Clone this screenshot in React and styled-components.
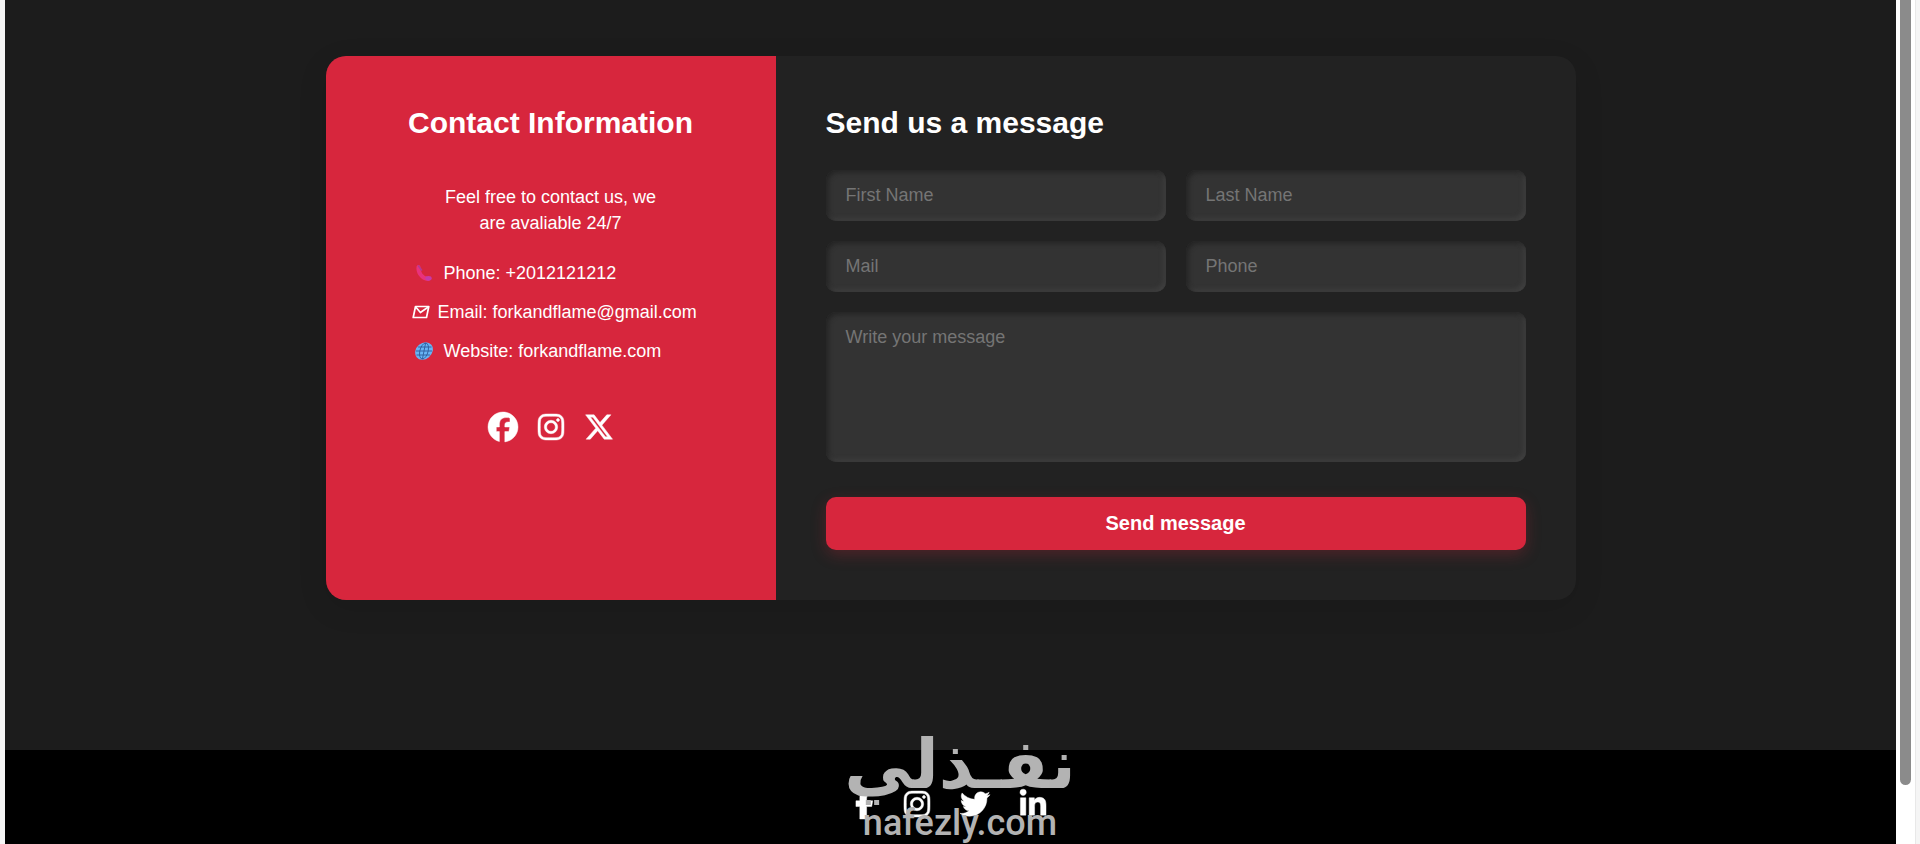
import React from "react";
import styled, { createGlobalStyle, css } from "styled-components";
import {
  FaFacebook,
  FaFacebookF,
  FaInstagram,
  FaLinkedinIn,
  FaTwitter,
  FaXTwitter,
} from "react-icons/fa6";

const colors = {
  primary: "#d7263d",
  page: "#1c1c1c",
  card: "#222222",
  field: "#333333",
  placeholder: "#757575",
  watermark: "#b3b3b3",
};

function PhoneIcon() {
  return (
    <svg width="18" height="18" viewBox="0 0 18 18" fill="none" aria-hidden="true">
      <path
        d="M3.500 3C2.800 8 6.500 14.500 13 15"
        stroke="#e8327c"
        strokeWidth="4"
        strokeLinecap="round"
      />
      <path d="M3.500 2l3 4" stroke="#b23a94" strokeWidth="1.600" strokeLinecap="round" />
      <ellipse cx="13.500" cy="14.300" rx="3.200" ry="2.400" fill="#c63aa8" />
    </svg>
  );
}

function MailIcon() {
  return (
    <svg width="18" height="14" viewBox="0 0 18 14" fill="none" stroke="white" aria-hidden="true">
      <path d="M3.500 1.500h13.300l-2.300 11H1.200z" strokeWidth="1.700" strokeLinejoin="round" />
      <path d="M3.700 2l4.700 5.500L16.300 2" strokeWidth="1.700" strokeLinejoin="round" />
    </svg>
  );
}

function GlobeIcon() {
  return (
    <svg width="20" height="18" viewBox="0 0 20 18" aria-hidden="true">
      <g transform="matrix(1 0 -0.200 1 2.800 0)">
        <circle cx="9" cy="9" r="8.700" fill="#67b4f4" />
        <g fill="none" stroke="#2f5f9f" strokeWidth="0.900">
          <ellipse cx="9" cy="9" rx="4.200" ry="8" />
          <path d="M9 1v16M1 9h16M2.300 5h13.400M2.300 13h13.400" />
        </g>
      </g>
    </svg>
  );
}

export default function App() {
  return (
    <Shell>
      <GlobalStyle />
      <Page>
        <ContactSection>
          <Card>
            <InfoPanel>
              <Title>Contact Information</Title>
              <Intro>Feel free to contact us, we are avaliable 24/7</Intro>
              <ContactList>
                <ContactItem>
                  <IconSlot $wide>
                    <PhoneIcon />
                  </IconSlot>
                  Phone: +2012121212
                </ContactItem>
                <ContactItem>
                  <IconSlot>
                    <MailIcon />
                  </IconSlot>
                  Email: forkandflame@gmail.com
                </ContactItem>
                <ContactItem>
                  <IconSlot $wide>
                    <GlobeIcon />
                  </IconSlot>
                  Website: forkandflame.com
                </ContactItem>
              </ContactList>
              <Socials $gap={20}>
                <SocialLink href="#facebook" aria-label="Facebook" $width={30}>
                  <FaFacebook />
                </SocialLink>
                <SocialLink href="#instagram" aria-label="Instagram" $width={26}>
                  <FaInstagram />
                </SocialLink>
                <SocialLink href="#x" aria-label="X" $width={30}>
                  <FaXTwitter />
                </SocialLink>
              </Socials>
            </InfoPanel>

            <MessageForm onSubmit={(e) => e.preventDefault()}>
              <Title>Send us a message</Title>
              <Fields>
                <Input type="text" placeholder="First Name" aria-label="First Name" />
                <Input type="text" placeholder="Last Name" aria-label="Last Name" />
                <Input type="email" placeholder="Mail" aria-label="Mail" />
                <Input type="tel" placeholder="Phone" aria-label="Phone" />
                <TextArea placeholder="Write your message" aria-label="Write your message" />
              </Fields>
              <SendButton type="submit">Send message</SendButton>
            </MessageForm>
          </Card>
        </ContactSection>

        <Footer>
          <Socials $gap={30}>
            <SocialLink href="#facebook" aria-label="Facebook" $width={19}>
              <FaFacebookF />
            </SocialLink>
            <SocialLink href="#instagram" aria-label="Instagram" $width={26}>
              <FaInstagram />
            </SocialLink>
            <SocialLink href="#twitter" aria-label="Twitter" $width={30}>
              <FaTwitter />
            </SocialLink>
            <SocialLink href="#linkedin" aria-label="LinkedIn" $width={26}>
              <FaLinkedinIn />
            </SocialLink>
          </Socials>
        </Footer>
      </Page>

      <ScrollTrack>
        <ScrollThumb />
      </ScrollTrack>

      <Watermark>
        <WatermarkArabic lang="ar" dir="rtl">نفـذلي</WatermarkArabic>
        <WatermarkLatin>nafezly.com</WatermarkLatin>
      </Watermark>
    </Shell>
  );
}

const GlobalStyle = createGlobalStyle`
  * {
    box-sizing: border-box;
    margin: 0;
    padding: 0;
  }

  body {
    background: #f5f5f5;
    font-family: "Liberation Sans", Arial, sans-serif;
    overflow: hidden;
  }
`;

const Shell = styled.div`
  display: flex;
  height: 100vh;
  padding: 0 4px 0 5px;
  position: relative;
  overflow: hidden;
`;

const Page = styled.div`
  flex: 1;
  min-width: 0;
  background: ${colors.page};
`;

const ContactSection = styled.section`
  display: flex;
  justify-content: center;
  padding: 56px 20px 150px;
`;

const Card = styled.div`
  display: flex;
  width: 100%;
  max-width: 1250px;
  border-radius: 20px;
  overflow: hidden;
  background: ${colors.card};
  box-shadow: 0 8px 30px rgba(0, 0, 0, 0.1);
`;

const InfoPanel = styled.div`
  flex: 0 0 36%;
  display: flex;
  flex-direction: column;
  align-items: center;
  padding: 50px 30px;
  color: white;
  background: ${colors.primary};
`;

const Title = styled.h2`
  font-size: 30px;
  line-height: 34px;
  font-weight: 700;
  color: white;
`;

const Intro = styled.p`
  max-width: 220px;
  margin-top: 44px;
  font-size: 18px;
  line-height: 26px;
  text-align: center;
`;

const ContactList = styled.ul`
  display: flex;
  flex-direction: column;
  gap: 13px;
  width: 278px;
  margin: 24px 0 48px;
  list-style: none;
`;

const ContactItem = styled.li`
  display: flex;
  align-items: center;
  gap: 8px;
  font-size: 18px;
  line-height: 26px;
  white-space: nowrap;
`;

const IconSlot = styled.span`
  display: flex;
  flex-shrink: 0;
  justify-content: center;
  width: ${({ $wide }) => ($wide ? "24px" : "18px")};
`;

const Socials = styled.nav`
  display: flex;
  justify-content: center;
  gap: ${({ $gap }) => $gap}px;
`;

const SocialLink = styled.a`
  display: flex;
  font-size: 30px;
  color: white;

  svg {
    width: ${({ $width }) => $width}px;
    height: 30px;
    overflow: visible;
    stroke: currentColor;
    stroke-width: 8px;
  }
`;

const MessageForm = styled.form`
  flex: 1;
  padding: 50px;
`;

const Fields = styled.div`
  display: grid;
  grid-template-columns: 1fr 1fr;
  gap: 20px;
  margin: 30px 0 35px;
`;

const FieldStyles = css`
  width: 100%;
  border: none;
  outline: none;
  border-radius: 10px;
  color: white;
  font-family: inherit;
  font-size: 18px;
  background: ${colors.field};
  box-shadow: inset 2px 2px 5px ${colors.card}, inset -2px -2px 5px #444444;

  &::placeholder {
    color: ${colors.placeholder};
  }
`;

const Input = styled.input`
  ${FieldStyles}
  height: 51px;
  padding: 0 20px;
`;

const TextArea = styled.textarea`
  ${FieldStyles}
  grid-column: 1 / -1;
  display: block;
  height: 150px;
  padding: 15px 20px;
  resize: none;
`;

const SendButton = styled.button`
  width: 100%;
  height: 53px;
  border: none;
  border-radius: 10px;
  color: white;
  font-family: inherit;
  font-size: 20px;
  font-weight: 700;
  cursor: pointer;
  background: ${colors.primary};
  box-shadow: 0 5px 15px rgba(215, 38, 61, 0.25);
`;

const Footer = styled.footer`
  padding: 39px 20px;
  background: black;
`;

const ScrollTrack = styled.div`
  width: 20px;
  padding: 0 4px;
  background: white;
  border-right: 1px solid #e8e8e8;
`;

const ScrollThumb = styled.div`
  height: 93%;
  border-radius: 0 0 6px 6px;
  background: #8b8b8b;
`;

const Watermark = styled.div`
  position: absolute;
  bottom: 0;
  left: 50%;
  transform: translateX(-50%);
  display: flex;
  flex-direction: column;
  align-items: center;
  color: ${colors.watermark};
  pointer-events: none;
`;

const WatermarkArabic = styled.span`
  font-family: "DejaVu Sans", sans-serif;
  font-size: 68px;
  line-height: 74px;
  font-weight: 700;
`;

const WatermarkLatin = styled.span`
  font-family: Roboto, sans-serif;
  font-size: 36px;
  line-height: 42px;
  font-weight: 500;
`;
